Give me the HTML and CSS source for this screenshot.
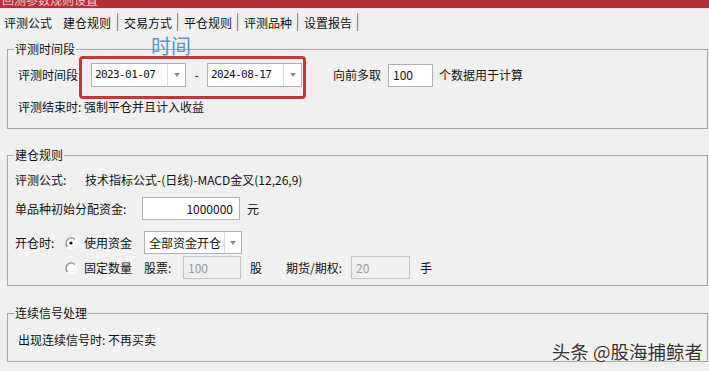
FILE: index.html
```html
<!DOCTYPE html>
<html lang="zh-CN">
<head>
<meta charset="utf-8">
<title>回测参数规则设置</title>
<link rel="stylesheet" href="styles.css">
</head>
<body>
<div class="window">
  <div class="titlebar"><span class="title-text">回测参数规则设置</span></div>
  <div class="tabs">
    <div class="tab first">评测公式</div>
    <div class="tab active">建仓规则</div>
    <div class="tab">交易方式</div>
    <div class="tab">平仓规则</div>
    <div class="tab">评测品种</div>
    <div class="tab">设置报告</div>
  </div>
  <div class="page">
    <fieldset class="group g1">
      <legend>评测时间段</legend>
      <div class="row r-dates">
        <span class="lbl-period">评测时间段</span>
        <div class="combo date">
          <span class="val mono">2023-01-07</span>
          <span class="btn"><i class="arrow"></i></span>
        </div>
        <span class="dash">-</span>
        <div class="combo date">
          <span class="val mono">2024-08-17</span>
          <span class="btn"><i class="arrow"></i></span>
        </div>
        <span class="pre">向前多取</span>
        <div class="input n100">100</div>
        <span class="post">个数据用于计算</span>
      </div>
      <div class="row r-end">评测结束时: 强制平仓并且计入收益</div>
    </fieldset>

    <fieldset class="group g2">
      <legend>建仓规则</legend>
      <div class="row r-formula">
        <span class="lbl-formula">评测公式:</span>
        <span>技术指标公式-(日线)-MACD金叉(12,26,9)</span>
      </div>
      <div class="row r-capital">
        <span class="lbl-capital">单品种初始分配资金:</span>
        <div class="input capital">1000000</div>
        <span class="unit-yuan">元</span>
      </div>
      <div class="row r-open">
        <span class="lbl-open">开仓时:</span>
        <span class="radio">
          <svg width="12" height="12" viewBox="0 0 12 12"><path d="M10 2.5 A5 5 0 1 0 2.5 10" fill="none" stroke="#8a8a8a" stroke-width="1.2"/><path d="M2.5 10 A5 5 0 0 0 10 2.5" fill="none" stroke="#ffffff" stroke-width="1.2"/><circle cx="6" cy="6" r="3.8" fill="#ffffff"/><circle cx="6" cy="6" r="1.6" fill="#111"/></svg>
        </span>
        <span class="opt">使用资金</span>
        <div class="combo mode">
          <span class="val">全部资金开仓</span>
          <span class="btn"><i class="arrow"></i></span>
        </div>
      </div>
      <div class="row r-fixed">
        <span class="radio">
          <svg width="12" height="12" viewBox="0 0 12 12"><path d="M10 2.5 A5 5 0 1 0 2.5 10" fill="none" stroke="#8a8a8a" stroke-width="1.2"/><path d="M2.5 10 A5 5 0 0 0 10 2.5" fill="none" stroke="#ffffff" stroke-width="1.2"/><circle cx="6" cy="6" r="3.8" fill="#ffffff"/></svg>
        </span>
        <span class="opt">固定数量</span>
        <span class="lbl-stock">股票:</span>
        <div class="input disabled stock">100</div>
        <span class="unit-gu">股</span>
        <span class="lbl-fut">期货/期权:</span>
        <div class="input disabled fut">20</div>
        <span class="unit-shou">手</span>
      </div>
    </fieldset>

    <fieldset class="group g3">
      <legend>连续信号处理</legend>
      <div class="row r-signal">出现连续信号时: 不再买卖</div>
    </fieldset>
  </div>

  <div class="annot-box"></div>
  <div class="annot-text">时间</div>
  <div class="watermark">头条 @股海捕鲸者</div>
</div>
</body>
</html>
```

FILE: styles.css
```css
* { box-sizing: border-box; }

html, body {
  margin: 0;
  padding: 0;
  background: #f0f0f0;
}

body {
  font-family: "Noto Sans CJK SC", "Microsoft YaHei", sans-serif;
  font-size: 12px;
  line-height: 14px;
  color: #111;
}

.window {
  position: relative;
  width: 709px;
  height: 371px;
  overflow: hidden;
}

.titlebar {
  height: 9px;
  background: #b2313b;
  border-bottom: 1px solid #f3e1e4;
  overflow: hidden;
}

.title-text {
  display: block;
  margin-top: -8px;
  padding-left: 2px;
  line-height: 16px;
  color: #f2c9cc;
}

.tabs {
  display: flex;
  padding-top: 4px;
}

.tab {
  padding: 2px 5px 1px 6px;
  line-height: 15px;
  border-right: 1px solid #8c8c8c;
  box-shadow: 1px 0 0 #dadada;
  white-space: nowrap;
}

.tab.first {
  padding-left: 4px;
  border-right: none;
  box-shadow: none;
}

.tab.active {
  padding-right: 6px;
}

.page {
  padding: 11px 1px 0 7px;
}

.group {
  margin: 0;
  border: 1px solid #a6a6a6;
  min-width: 0;
}

.group legend {
  margin-left: -4px;
  padding: 0 1px;
  line-height: 14px;
}

.g1 {
  padding: 7px 10px 14px 10px;
}

.g2 {
  margin-top: 19px;
  padding: 0 7px 6px 7px;
}

.g2 legend {
  margin-left: -1px;
}

.g3 {
  margin-top: 20px;
  padding: 13px 10px 14px 10px;
}

.row {
  display: flex;
  align-items: center;
  white-space: nowrap;
}

/* group 1 */
.r-dates { height: 24px; }
.lbl-period { width: 73px; }
.dash { width: 21px; text-align: center; }
.pre { margin-left: 31px; width: 55px; }
.post { margin-left: 6px; }
.r-end { margin-top: 13px; height: 14px; }

/* combos */
.combo {
  display: flex;
  align-items: stretch;
  background: #fff;
  border: 1px solid #aeb0b5;
}

.combo .val {
  flex: 1;
  display: flex;
  align-items: center;
  padding-left: 3px;
  overflow: hidden;
}

.combo .btn {
  width: 18px;
  border-left: 1px solid #dcdcdc;
  display: flex;
  align-items: center;
  justify-content: center;
}

.arrow {
  width: 0;
  height: 0;
  border-top: 4px solid #8a8a8a;
  border-left: 3.5px solid transparent;
  border-right: 3.5px solid transparent;
}

.combo.date {
  width: 95px;
  height: 24px;
}

.mono {
  font-family: "DejaVu Sans Mono", "Liberation Mono", monospace;
  font-size: 11px;
  letter-spacing: -0.6px;
}

.combo.mode {
  width: 98px;
  height: 23px;
}

.combo.mode .val { padding-left: 4px; }
.combo.mode .btn { width: 17px; }

/* inputs */
.input {
  display: flex;
  align-items: center;
  height: 23px;
  background: #fff;
  border: 1px solid #aeb0b5;
  padding-left: 4px;
}

.n100 { width: 45px; height: 23px; }

.capital {
  width: 98px;
  justify-content: flex-end;
  padding-right: 6px;
}

.input.disabled {
  background: #f0f0f0;
  border-color: #c4c4c4;
  color: #9a9a9a;
  padding-left: 4px;
}

.stock { width: 58px; }
.fut { width: 59px; }

/* group 2 */
.r-formula { margin-top: 11px; height: 14px; }
.lbl-formula { width: 70px; }
.r-capital { margin-top: 10px; }
.lbl-capital { width: 127px; }
.unit-yuan { margin-left: 7px; }
.r-open { margin-top: 11px; }
.lbl-open { width: 50px; }
.radio { display: flex; width: 12px; height: 12px; margin-right: 7px; }
.opt { width: 48px; margin-right: 12px; }
.r-fixed { margin-top: 2px; padding-left: 50px; }
.lbl-stock { width: 39px; }
.unit-gu { margin-left: 9px; width: 36px; }
.lbl-fut { width: 65px; }
.unit-shou { margin-left: 10px; }

/* group 3 */
.r-signal { height: 14px; }

/* annotation overlays */
.annot-box {
  position: absolute;
  left: 79px;
  top: 56px;
  width: 227px;
  height: 43px;
  border: 3px solid #c8343b;
  border-radius: 4px;
}

.annot-text {
  position: absolute;
  left: 151px;
  top: 35px;
  font-size: 20px;
  line-height: 22px;
  color: #5b95cc;
}

.watermark {
  position: absolute;
  right: 6px;
  bottom: 9px;
  font-size: 18.5px;
  line-height: 22px;
  color: #333;
  text-shadow: 0 0 2px #fff, 0 0 1px #fff;
}
```
